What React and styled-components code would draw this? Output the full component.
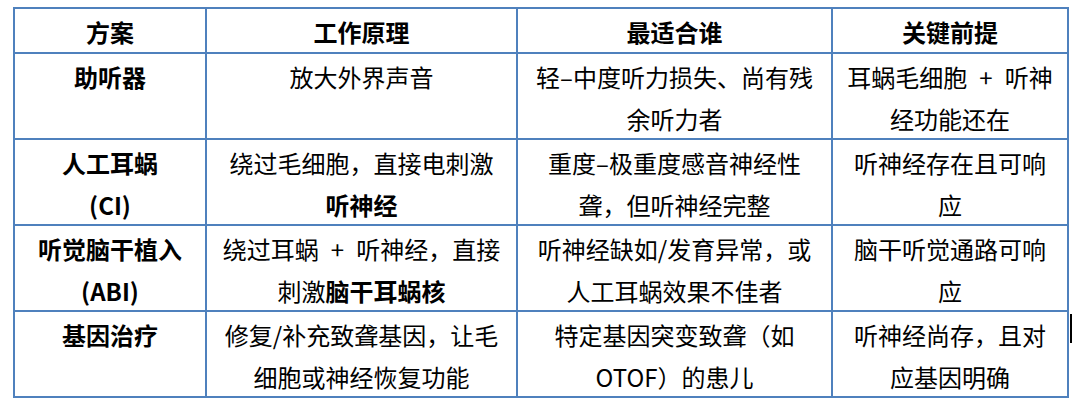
import React from 'react'
import styled, { createGlobalStyle } from 'styled-components'

/* ========================================================================== */
const GlobalStyle = createGlobalStyle`
  html, body {
    margin: 0;
    padding: 0;
    background: #ffffff;
  }
  body {
    font-family: "Noto Sans CJK SC", "Noto Sans", sans-serif;
    color: #000000;
  }
`
const BORDER = '#4f81bd'
const PLUS = '\u2002+\u2002'

const Page = styled.div`
  position: relative;
  width: 1079px;
  height: 404px;
  padding: 7px 0 0 13px;
  box-sizing: border-box;
`
const Table = styled.div`
  display: grid;
  grid-template-columns: 192px 311px 315px 236px;
  grid-template-rows: 45px repeat(4, 86px);
  width: max-content;
  border-left: 2px solid ${BORDER};
  border-top: 2px solid ${BORDER};
`
const Cell = styled.div`
  box-sizing: border-box;
  border-right: 2px solid ${BORDER};
  border-bottom: 2px solid ${BORDER};
  padding-top: 2px;
  font-size: 24px;
  line-height: 42px;
  text-align: center;
  white-space: nowrap;
  font-weight: ${p => (p.$bold ? 700 : 400)};
`
const Strong = styled.b`
  font-weight: 700;
`
const Caret = styled.span`
  position: absolute;
  left: 1070px;
  top: 314px;
  width: 2px;
  height: 29px;
  background: #000000;
`

/* ========================================================================== */
const HEAD = ['方案', '工作原理', '最适合谁', '关键前提']

const ROWS = [
  [
    ['助听器'],
    ['放大外界声音'],
    ['轻–中度听力损失、尚有残', '余听力者'],
    [`耳蜗毛细胞${PLUS}听神`, '经功能还在'],
  ],
  [
    ['人工耳蜗', '(CI)'],
    ['绕过毛细胞，直接电刺激', <Strong key="b">听神经</Strong>],
    ['重度–极重度感音神经性', '聋，但听神经完整'],
    ['听神经存在且可响', '应'],
  ],
  [
    ['听觉脑干植入', '(ABI)'],
    [`绕过耳蜗${PLUS}听神经，直接`, <>刺激<Strong>脑干耳蜗核</Strong></>],
    ['听神经缺如/发育异常，或', '人工耳蜗效果不佳者'],
    ['脑干听觉通路可响', '应'],
  ],
  [
    ['基因治疗'],
    ['修复/补充致聋基因，让毛', '细胞或神经恢复功能'],
    ['特定基因突变致聋（如', 'OTOF）的患儿'],
    ['听神经尚存，且对', '应基因明确'],
  ],
]

/* ========================================================================== */
export default function App() {
  return (
    <Page>
      <GlobalStyle />
      <Table>
        {HEAD.map(h => (
          <Cell key={h} $bold>{h}</Cell>
        ))}
        {ROWS.map((row, r) =>
          row.map((lines, c) => (
            <Cell key={`${r}-${c}`} $bold={c === 0}>
              {lines.map((line, i) => (
                <div key={i}>{line}</div>
              ))}
            </Cell>
          ))
        )}
      </Table>
      <Caret />
    </Page>
  )
}
